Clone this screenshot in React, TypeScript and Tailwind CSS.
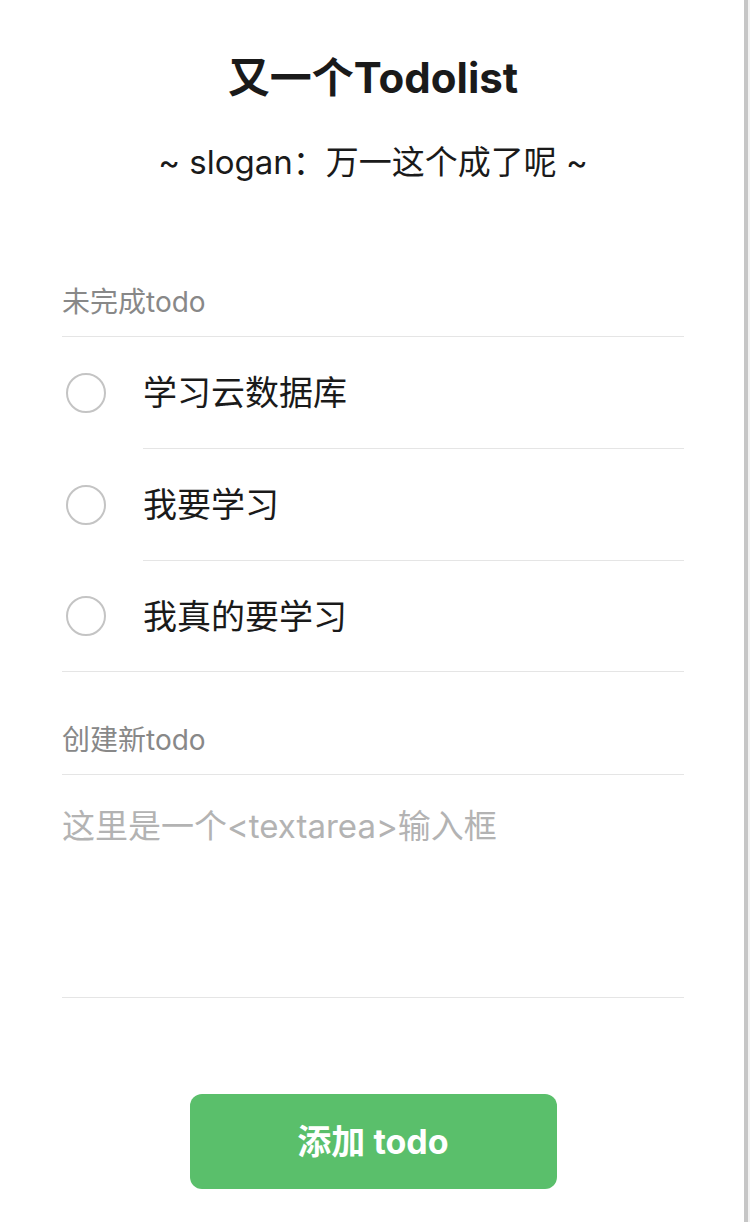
import { useState } from 'react'

const todos = ['学习云数据库', '我要学习', '我真的要学习']

export default function App() {
  const [text, setText] = useState('')

  return (
    <div className="flex min-h-[1222px] w-[750px] bg-white text-[#1a1a1a] font-['Inter','Noto_Sans_CJK_SC',sans-serif]">
      <div className="w-[744px] pl-[62px] pr-[60px]">
        <h1 className="mt-[56px] text-center text-[42px] font-bold leading-[44px]">又一个Todolist</h1>
        <p className="mt-[42px] text-center text-[33px] leading-[40px]">~ slogan：万一这个成了呢 ~</p>

        <div className="mt-[100px] pb-[14px] text-[28px] leading-[40px] text-[#888888]">未完成todo</div>
        <ul className="border-y border-[#e5e5e5]">
          {todos.map((t, i) => (
            <li key={t} className={`flex ${i === todos.length - 1 ? 'h-[110px]' : 'h-[112px]'}`}>
              <div className="flex w-[81px] items-center pl-[4px]">
                <span className="block h-[40px] w-[40px] rounded-full border-2 border-[#c4c4c4]" />
              </div>
              <div
                className={`flex flex-1 items-center text-[34px] ${i === todos.length - 1 ? '' : 'border-b border-[#e5e5e5]'}`}
              >
                {t}
              </div>
            </li>
          ))}
        </ul>

        <div className="mt-[48px] pb-[14px] text-[28px] leading-[40px] text-[#888888]">创建新todo</div>
        <div className="h-[224px] border-y border-[#e5e5e5]">
          <textarea
            value={text}
            onChange={(e) => setText(e.target.value)}
            placeholder="这里是一个<textarea>输入框"
            className="block h-full w-full resize-none pt-[29px] text-[33px] leading-[44px] outline-none placeholder:text-[#b3b3b3]"
          />
        </div>

        <div className="mt-[96px] flex justify-center">
          <button className="h-[95px] w-[367px] rounded-[12px] bg-[#5abf6b] text-[34px] font-bold text-white">
            添加 todo
          </button>
        </div>
      </div>
      <div className="w-[4px] bg-[#c6c6c6]" />
      <div className="w-[2px] bg-[#f2f2f2]" />
    </div>
  )
}
